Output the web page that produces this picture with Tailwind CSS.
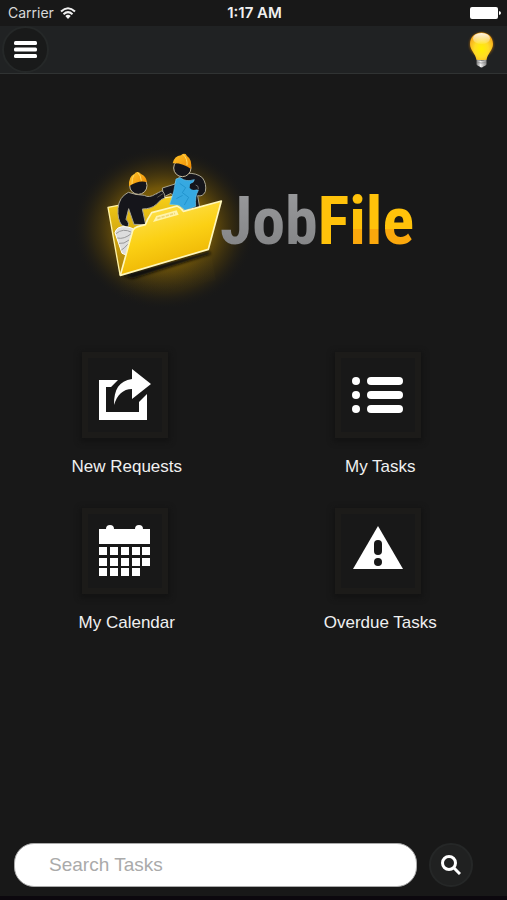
<!DOCTYPE html>
<html lang="en">
<head>
  <meta charset="UTF-8" />
  <meta name="viewport" content="width=device-width, initial-scale=1.0"/>
  <title>JobFile</title>
  <script src="https://cdn.jsdelivr.net/npm/@tailwindcss/browser@4"></script>
</head>
<body class="bg-[#181818] text-[#f0f0f0] min-h-screen flex flex-col border-b-4 border-[#0c080e] font-['Liberation_Sans',Arial,sans-serif]">
  <!-- Status bar -->
  <div class="grid grid-cols-3 items-center h-[26px] pl-2 pr-[6px] font-['Inter',sans-serif] text-[14px] leading-[26px]">
    <div class="flex items-center gap-[6px] text-[#d8d8d8]">
      <span>Carrier</span>
      <svg class="w-4 h-3" viewBox="0 0 16 12" fill="none" stroke="#f0f0f0" stroke-width="2">
        <path d="M1 4.500Q8-2 15 4.500M3.500 7.200Q8 3 12.500 7.200"/>
        <path d="M5.300 9Q8 6.600 10.700 9L8 12Z" fill="#f0f0f0" stroke="none"/>
      </svg>
    </div>
    <span class="text-center text-[15px] font-semibold">1:17 AM</span>
    <svg class="w-[31px] h-3 justify-self-end" viewBox="0 0 31 12" fill="#fff">
      <rect width="28" height="12" rx="2"/>
      <path d="M29 4q2 .5 2 2t-2 2z"/>
    </svg>
  </div>

  <!-- Header -->
  <header class="flex items-center justify-between h-12 pl-[2px] pr-3 bg-[#202223] border-b border-[#303333]">
    <button type="button" aria-label="Menu" class="size-[47px] rounded-full bg-[#191a1a] border-2 border-[#252828] flex items-center justify-center">
      <svg class="w-[23px] h-[17px]" viewBox="0 0 23 17" fill="#fff">
        <rect width="23" height="4" rx="1.500"/>
        <rect y="6.500" width="23" height="4" rx="1.500"/>
        <rect y="13" width="23" height="4" rx="1.500"/>
      </svg>
    </button>
    <button type="button" aria-label="Tips">
      <svg class="w-[27px] h-[38px]" viewBox="0 0 27 38">
        <defs>
          <radialGradient id="bulb" cx=".5" cy=".6" r=".6">
            <stop offset="0" stop-color="#fff000"/>
            <stop offset=".5" stop-color="#ffdc25"/>
            <stop offset="1" stop-color="#f3a51c"/>
          </radialGradient>
          <linearGradient id="shine" x2="0" y2="1">
            <stop offset="0" stop-color="#fff" stop-opacity=".9"/>
            <stop offset="1" stop-color="#fff" stop-opacity=".1"/>
          </linearGradient>
          <linearGradient id="cap">
            <stop offset="0" stop-color="#777"/>
            <stop offset=".4" stop-color="#f0f0f0"/>
            <stop offset="1" stop-color="#858585"/>
          </linearGradient>
          <filter id="halo" x="-30%" y="-30%" width="160%" height="160%"><feGaussianBlur stdDeviation="1.300"/></filter>
        </defs>
        <circle cx="13.500" cy="13.500" r="12" fill="#b16b00" opacity=".7" filter="url(#halo)"/>
        <path d="M13.500 1.500C6.500 1.500 2 6.500 2 13c0 6 5.500 9.500 6.500 16h10C19.500 22.500 25 19 25 13c0-6.500-4.500-11.500-11.500-11.500z" fill="url(#bulb)"/>
        <ellipse cx="13.500" cy="7.500" rx="8.500" ry="5.500" fill="url(#shine)"/>
        <path d="M8.500 28.500q5 2 10 0v5q-1 1.500-3 2-2 2-4 0-2-.5-3-2z" fill="url(#cap)"/>
        <path d="M9 31.500q4.500 1 9 0" fill="none" stroke="#888" stroke-width=".7"/>
      </svg>
    </button>
  </header>

  <main class="flex-1 pt-[66px]">
    <!-- Logo -->
    <h1 class="flex justify-center h-[170px] pr-4">
      <svg class="w-[146px] h-[170px] shrink-0 overflow-visible" viewBox="24 0 438 510" aria-hidden="true">
        <defs>
          <radialGradient id="glow">
            <stop offset="0" stop-color="#c59200"/>
            <stop offset=".5" stop-color="#8f6a04" stop-opacity=".75"/>
            <stop offset=".78" stop-color="#4d3b09" stop-opacity=".4"/>
            <stop offset="1" stop-color="#181818" stop-opacity="0"/>
          </radialGradient>
          <linearGradient id="front" x1=".2" y1="0" x2=".6" y2="1">
            <stop offset="0" stop-color="#ffe55b"/>
            <stop offset=".5" stop-color="#fbd014"/>
            <stop offset="1" stop-color="#e9ad00"/>
          </linearGradient>
          <linearGradient id="back" x2="0" y2="1">
            <stop offset="0" stop-color="#f8cf18"/>
            <stop offset="1" stop-color="#a87d05"/>
          </linearGradient>
          <linearGradient id="hat" x2="1" y2="1">
            <stop offset="0" stop-color="#ffc62a"/>
            <stop offset="1" stop-color="#ef8800"/>
          </linearGradient>
          <linearGradient id="mirror" x2="0" y2="1">
            <stop offset="0" stop-color="#54430f" stop-opacity=".4"/>
            <stop offset="1" stop-color="#181818" stop-opacity="0"/>
          </linearGradient>
          <filter id="soft" x="-10%" y="-20%" width="120%" height="140%"><feGaussianBlur stdDeviation="5"/></filter>
        </defs>
        <ellipse cx="285" cy="265" rx="275" ry="245" fill="url(#glow)"/>
        <path d="M153 412L425 338L440 420L155 490Z" fill="url(#mirror)"/>
        <path d="M160 406L420 334L426 342L190 416Z" fill="#100e08" filter="url(#soft)"/>
        <!-- back of the folder -->
        <path d="M117 202L190 188L310 170L345 205L250 300L153 404Z" fill="url(#back)" stroke="#fff2a5" stroke-width="4" stroke-linejoin="round"/>
        <!-- right worker -->
        <path d="M280 144L318 132Q325 108 352 100Q382 98 400 113Q414 132 409 155Q401 171 386 167L392 202L350 212L306 160L284 171Z" fill="#15151b" stroke="#aaa693" stroke-width="3" stroke-linejoin="round"/>
        <circle cx="340" cy="84" r="26" fill="#15151b" stroke="#c5b99b" stroke-width="3"/>
        <path d="M311 70Q316 48 336 46Q340 39 350 42L354 48Q370 58 366 87Q340 68 311 70Z" fill="url(#hat)"/>
        <path d="M342 43Q356 56 354 76" fill="none" stroke="#ffda62" stroke-width="3"/>
        <path d="M321 117L334 113Q350 127 376 119L366 138Q370 148 388 151Q377 169 380 199L349 211L330 196L302 193Q317 153 321 117Z" fill="#36a9e1" stroke="#6ccaf2" stroke-width="2"/>
        <path d="M332 130L350 143L340 158L359 172L346 195M322 176L341 166" fill="none" stroke="#1689c4" stroke-width="2"/>
        <path d="M363 133q12-12 22 1v12q-13 9-23-2z" fill="#15151b"/>
        <path d="M380 135q10 2 8 13" fill="none" stroke="#97968d" stroke-width="2"/>
        <!-- left worker -->
        <path d="M178 157Q150 171 147 205Q145 239 158 255L175 262Q184 251 171 238L179 206L195 253L230 254L220 207Q246 207 261 194L276 179L287 174Q288 157 278 153L260 162Q240 175 226 166Q200 165 178 157Z" fill="#15151b" stroke="#a8a493" stroke-width="3" stroke-linejoin="round"/>
        <path d="M262 164q7-10 14-10m-11 18l18-12" stroke="#777267" stroke-width="2" fill="none"/>
        <circle cx="208" cy="137" r="26" fill="#15151b" stroke="#c5b99b" stroke-width="3"/>
        <path d="M180 139Q178 110 196 102Q202 92 212 98L216 102Q231 108 234 126Q207 120 180 139Z" fill="url(#hat)"/>
        <path d="M195 104Q188 114 189 132M206 97Q216 107 217 122" fill="none" stroke="#ffda62" stroke-width="3"/>
        <!-- rolled plans -->
        <path d="M138 278Q143 258 169 260Q186 261 198 270L176 347L159 340Z" fill="#ddd" stroke="#fff" stroke-width="3"/>
        <path d="M141 281Q162 263 188 277M145 294Q165 299 188 280M150 310Q165 313 180 300M157 330Q165 326 176 313" fill="none" stroke="#999" stroke-width="3"/>
        <!-- front of the folder -->
        <path d="M154 406L191 272Q195 263 206 260L229 254Q235 237 248 218L324 198Q334 201 343 214L457 183L418 328Z" fill="url(#front)" stroke="#fff7bb" stroke-width="5" stroke-linejoin="round"/>
        <path d="M252 246L262 228L323 211L329 224Z" fill="#fff4ac"/>
        <path d="M265 235L318 220" stroke="#eed777" stroke-width="5" stroke-dasharray="10 3"/>
      </svg>
      <span class="-ml-[3px] pt-[42px] text-[66px] leading-[80px] font-bold font-['Roboto_Condensed','Roboto',sans-serif]"><span class="bg-linear-to-b from-[#9b9c9e] to-[#808183] bg-clip-text text-transparent">Job</span><span class="text-[#ffc20a]">F</span><span class="bg-linear-to-b from-[#ffc20a] from-60% to-[#fba80c] to-60% bg-clip-text text-transparent">ile</span></span>
    </h1>

    <!-- Menu tiles -->
    <nav class="grid grid-cols-2 gap-y-[31px] pt-[42px] text-[17px] leading-5 text-center">
      <a href="#requests" class="flex flex-col items-center gap-[19px]">
        <span class="size-[86px] mr-1 border-6 border-[#1c1b19] bg-[#181818] shadow-[0_2px_5px_2px_#131313] flex items-center justify-center">
          <svg class="size-[52px]" viewBox="0 0 52 52" fill="#fff">
            <path d="M0 11H19L12 18H7V43H40V33L48 25V51H0Z"/>
            <path d="M15 36C15 20 20 12 33 10V0L52 15L33 30V20C24 20 18 26 15 36Z"/>
          </svg>
        </span>
        New Requests
      </a>
      <a href="#tasks" class="flex flex-col items-center gap-[19px]">
        <span class="size-[86px] mr-1 border-6 border-[#1c1b19] bg-[#181818] shadow-[0_2px_5px_2px_#131313] flex items-center justify-center">
          <svg class="size-[52px]" viewBox="0 0 52 52" fill="#fff">
            <circle cx="4" cy="12" r="4"/>
            <circle cx="4" cy="26" r="4"/>
            <circle cx="4" cy="40" r="4"/>
            <rect x="15" y="8" width="36" height="8" rx="4"/>
            <rect x="15" y="22" width="36" height="8" rx="4"/>
            <rect x="15" y="36" width="36" height="8" rx="4"/>
          </svg>
        </span>
        My Tasks
      </a>
      <a href="#calendar" class="flex flex-col items-center gap-[19px]">
        <span class="size-[86px] mr-1 border-6 border-[#1c1b19] bg-[#181818] shadow-[0_2px_5px_2px_#131313] flex items-center justify-center">
          <svg class="size-[52px]" viewBox="0 0 52 52" fill="#fff">
            <path d="M0 4H7a4 4 0 0 1 8 0H36a4 4 0 0 1 8 0H51V19H0Z"/>
            <path d="M0 22h8v8H0zM11 22h8v8h-8zM22 22h8v8h-8zM33 22h8v8h-8zM43 22h8v8h-8z"/>
            <path d="M0 33h8v8H0zM11 33h8v8h-8zM22 33h8v8h-8zM33 33h8v8h-8zM43 33h8v8h-8z"/>
            <path d="M0 43h8v8H0zM11 43h8v8h-8zM22 43h8v8h-8zM33 43h8v8h-8z"/>
          </svg>
        </span>
        My Calendar
      </a>
      <a href="#overdue" class="flex flex-col items-center gap-[19px]">
        <span class="size-[86px] mr-1 border-6 border-[#1c1b19] bg-[#181818] shadow-[0_2px_5px_2px_#131313] flex items-center justify-center">
          <svg class="size-[52px]" viewBox="0 0 52 52">
            <path d="M26 1L51 44H1Z" fill="#fff"/>
            <rect x="22" y="15" width="8" height="15" rx="4" fill="#181818"/>
            <circle cx="26" cy="37" r="4" fill="#181818"/>
          </svg>
        </span>
        Overdue Tasks
      </a>
    </nav>
  </main>

  <!-- Search -->
  <form role="search" class="flex items-center gap-3 pl-[14px] pr-[34px] pb-[9px]">
    <input type="search" aria-label="Search Tasks" placeholder="Search Tasks" class="flex-1 min-w-0 h-11 pl-[34px] pr-4 rounded-[20px] bg-white border border-[#aaa] text-[19px] text-[#333] placeholder:text-[#aaa]" />
    <button type="submit" aria-label="Search" class="size-11 rounded-full bg-[#202121] border-2 border-[#252727] flex items-center justify-center">
      <svg class="size-5" viewBox="0 0 20 20" fill="none" stroke="#fff" stroke-width="3">
        <circle cx="8" cy="8" r="6.500"/>
        <path d="M12.500 12.500L19 19"/>
      </svg>
    </button>
  </form>
</body>
</html>
